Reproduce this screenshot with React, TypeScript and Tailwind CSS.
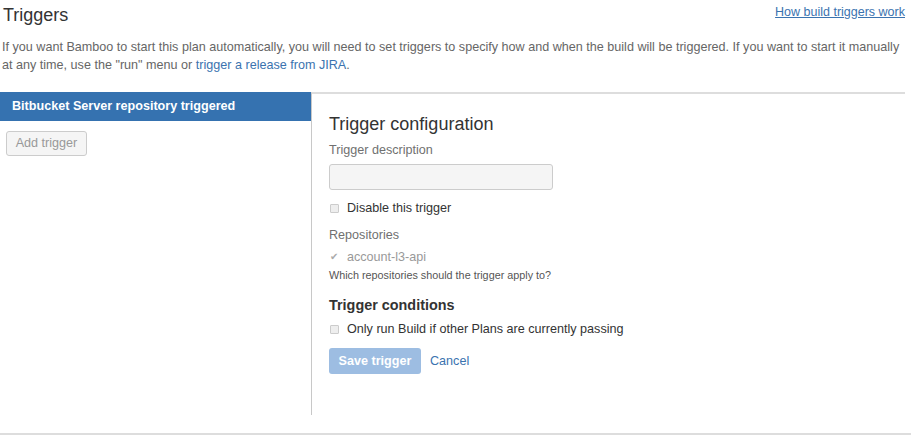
export default function App() {
  return (
    <div className="w-[911px] h-[437px] bg-white overflow-hidden font-['Liberation_Sans',Arial,sans-serif] text-[#333]">
      {/* Page header */}
      <div className="flex justify-between items-start pl-[3px] pr-[6px] pt-[4px]">
        <h2 className="text-[18px] leading-[22px] font-normal text-[#333]">Triggers</h2>
        <a href="#" className="text-[12.5px] leading-[16px] text-[#3b73af] underline">
          How build triggers work
        </a>
      </div>

      <p className="mt-[12px] pl-[2px] pr-[6px] text-[12.6px] leading-[18px] text-[#666]">
        If you want Bamboo to start this plan automatically, you will need to set triggers to specify how and when the build will be triggered. If you want to start it manually
        <br />
        at any time, use the "run" menu or{" "}
        <a href="#" className="text-[#3b73af]">
          trigger a release from JIRA
        </a>
        .
      </p>

      {/* Triggers editor */}
      <div className="mt-[18px] flex pr-[6px]">
        <div className="w-[311px]">
          <div className="h-[29px] bg-[#3572b0] flex items-center pl-[12px] text-[12.6px] font-bold text-white">
            Bitbucket Server repository triggered
          </div>
          <button className="mt-[10px] ml-[6px] h-[25px] w-[81px] rounded-[3px] border border-[#ccc] bg-[#f5f5f5] text-[12.6px] text-[#999]">
            Add trigger
          </button>
        </div>

        <div className="flex-1 h-[323px] border-t-2 border-t-[#ddd] border-l border-l-[#c8c8c8] pl-[17px] pt-[19px]">
          <h3 className="text-[18px] leading-[22px] font-normal text-[#333]">Trigger configuration</h3>
          <div className="mt-[6px] text-[12.6px] leading-[18px] text-[#707070]">Trigger description</div>
          <div className="mt-[5px] w-[224px] h-[26px] rounded-[3px] border border-[#ccc] bg-[#f5f5f5]" />

          <label className="mt-[9px] flex items-center h-[18px] text-[12.6px] text-[#333]">
            <span className="ml-[1px] w-[9px] h-[9px] border border-[#ccc] bg-[#eee] rounded-[1px]" />
            <span className="ml-[8px]">Disable this trigger</span>
          </label>

          <div className="mt-[9px] text-[12.6px] leading-[18px] text-[#707070]">Repositories</div>
          <label className="mt-[4px] flex items-center h-[18px] text-[12.6px] text-[#999]">
            <span className="ml-[1px] w-[9px] text-[10px] leading-none text-[#aaa]">✔</span>
            <span className="ml-[8px]">account-l3-api</span>
          </label>
          <div className="mt-[2px] text-[10.8px] leading-[14px] text-[#555]">
            Which repositories should the trigger apply to?
          </div>

          <h4 className="mt-[13px] text-[14.4px] leading-[20px] font-bold text-[#333]">Trigger conditions</h4>
          <label className="mt-[5px] flex items-center h-[18px] text-[12.6px] text-[#333]">
            <span className="ml-[1px] w-[9px] h-[9px] border border-[#ccc] bg-[#eee] rounded-[1px]" />
            <span className="ml-[8px]">Only run Build if other Plans are currently passing</span>
          </label>

          <div className="mt-[10px] flex items-center">
            <button className="h-[26px] w-[92px] rounded-[3px] bg-[#9dbde2] text-[12.6px] font-bold text-white">
              Save trigger
            </button>
            <a href="#" className="ml-[9px] text-[12.6px] text-[#3b73af]">
              Cancel
            </a>
          </div>
        </div>
      </div>

      <div className="mt-[18px] h-[2px] bg-[#ddd]" />
    </div>
  );
}
